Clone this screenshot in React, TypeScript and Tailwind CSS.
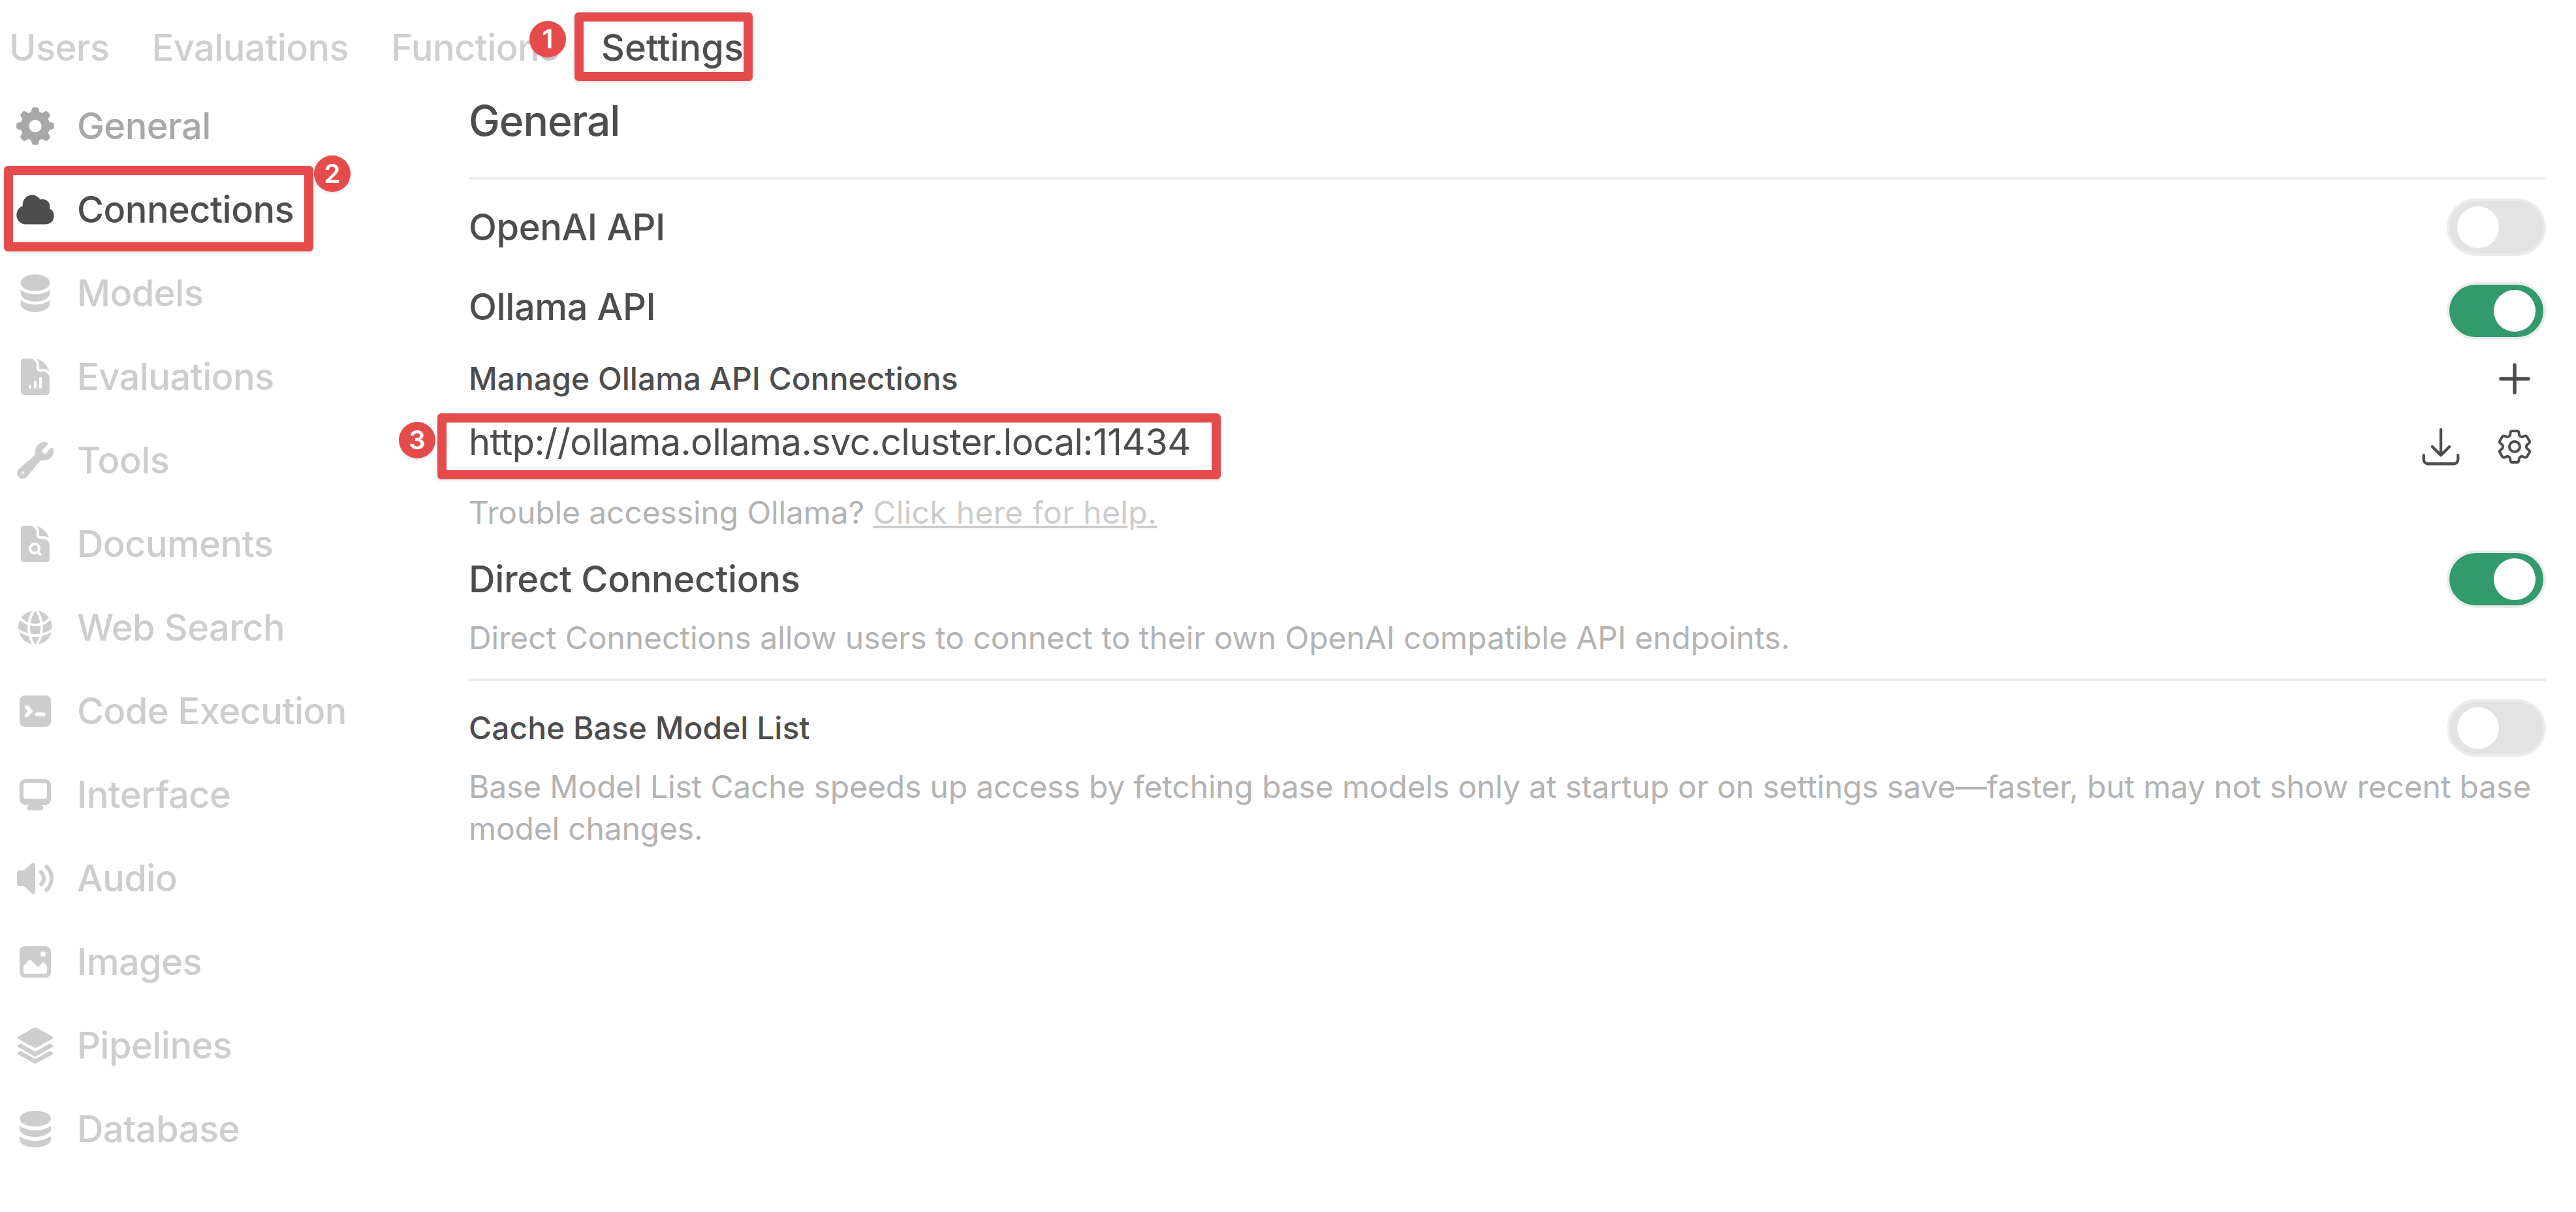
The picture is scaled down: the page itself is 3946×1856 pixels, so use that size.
import type { ReactNode } from "react";
import {
  HiDocumentChartBar,
  HiDocumentMagnifyingGlass,
  HiGlobeAlt,
  HiWrench,
  HiOutlineArrowDownTray,
  HiOutlineCog6Tooth,
} from "react-icons/hi2";

function Glyph({ box, paths, className }: { box: number; paths: string[]; className?: string }) {
  return (
    <svg viewBox={`0 0 ${box} ${box}`} fill="currentColor" className={className}>
      {paths.map((d) => (
        <path key={d} fillRule="evenodd" clipRule="evenodd" d={d} />
      ))}
    </svg>
  );
}

const gear = [
  "M8.34 1.804A1 1 0 019.32 1h1.36a1 1 0 01.98.804l.295 1.473c.497.144.971.342 1.416.587l1.25-.834a1 1 0 011.262.125l.962.962a1 1 0 01.125 1.262l-.834 1.25c.245.445.443.919.587 1.416l1.473.294a1 1 0 01.804.98v1.361a1 1 0 01-.804.98l-1.473.295a6.95 6.95 0 01-.587 1.416l.834 1.25a1 1 0 01-.125 1.262l-.962.962a1 1 0 01-1.262.125l-1.25-.834a6.953 6.953 0 01-1.416.587l-.294 1.473a1 1 0 01-.98.804H9.32a1 1 0 01-.98-.804l-.295-1.473a6.957 6.957 0 01-1.416-.587l-1.25.834a1 1 0 01-1.262-.125l-.962-.962a1 1 0 01-.125-1.262l.834-1.25a6.957 6.957 0 01-.587-1.416l-1.473-.294A1 1 0 011 10.68V9.32a1 1 0 01.804-.98l1.473-.295c.144-.497.342-.971.587-1.416l-.834-1.25a1 1 0 01.125-1.262l.962-.962A1 1 0 015.38 3.03l1.25.834a6.957 6.957 0 011.416-.587l.294-1.473zM13 10a3 3 0 11-6 0 3 3 0 016 0z",
];
const cloud = [
  "M1 12.5A4.5 4.5 0 005.5 17H15a4 4 0 001.866-7.539 3.504 3.504 0 00-4.504-4.272A4.5 4.5 0 004.06 8.235 4.502 4.502 0 001 12.5z",
];
const stack20 = [
  "M10 1c3.866 0 7 1.79 7 4s-3.134 4-7 4-7-1.79-7-4 3.134-4 7-4zm5.694 8.13c.464-.264.91-.583 1.306-.952V10c0 2.21-3.134 4-7 4s-7-1.79-7-4V8.178c.396.37.842.688 1.306.953C5.838 10.006 7.854 10.5 10 10.5s4.162-.494 5.694-1.37zM3 13.179V15c0 2.21 3.134 4 7 4s7-1.79 7-4v-1.822c-.396.37-.842.688-1.306.953-1.532.875-3.548 1.369-5.694 1.369s-4.162-.494-5.694-1.37A7.009 7.009 0 013 13.179z",
];
const stack16 = [
  "M8 7c3.314 0 6-1.343 6-3s-2.686-3-6-3-6 1.343-6 3 2.686 3 6 3Z",
  "M8 8.5c1.84 0 3.579-.37 4.914-1.037A6.33 6.33 0 0 0 14 6.78V8c0 1.657-2.686 3-6 3S2 9.657 2 8V6.78c.346.273.72.5 1.087.683C4.42 8.131 6.16 8.5 8 8.5Z",
  "M8 12.5c1.84 0 3.579-.37 4.914-1.037.366-.183.74-.41 1.086-.684V12c0 1.657-2.686 3-6 3s-6-1.343-6-3v-1.22c.346.273.72.5 1.087.683C4.42 12.131 6.16 12.5 8 12.5Z",
];
const terminal = [
  "M2 4a2 2 0 0 1 2-2h8a2 2 0 0 1 2 2v8a2 2 0 0 1-2 2H4a2 2 0 0 1-2-2V4Zm2.22 1.97a.75.75 0 0 0 0 1.06l.97.97-.97.97a.75.75 0 1 0 1.06 1.06l1.5-1.5a.75.75 0 0 0 0-1.06l-1.5-1.5a.75.75 0 0 0-1.06 0ZM8.75 8.5a.75.75 0 0 0 0 1.5h2.5a.75.75 0 0 0 0-1.5h-2.5Z",
];
const desktop = [
  "M2 4.25A2.25 2.25 0 0 1 4.25 2h7.5A2.25 2.25 0 0 1 14 4.25v5.5A2.25 2.25 0 0 1 11.75 12h-1.312c.1.128.21.248.328.36a.75.75 0 0 1 .234.545v.345a.75.75 0 0 1-.75.75h-4.5a.75.75 0 0 1-.75-.75v-.345a.75.75 0 0 1 .234-.545c.118-.111.228-.232.328-.36H4.25A2.25 2.25 0 0 1 2 9.75v-5.5Zm2.25-.75a.75.75 0 0 0-.75.75v4.5c0 .414.336.75.75.75h7.5a.75.75 0 0 0 .75-.75v-4.5a.75.75 0 0 0-.75-.75h-7.5Z",
];
const speaker = [
  "M7.557 2.066A.75.75 0 0 1 8 2.75v10.5a.75.75 0 0 1-1.248.56L3.59 11H2a1 1 0 0 1-1-1V6a1 1 0 0 1 1-1h1.59l3.162-2.81a.75.75 0 0 1 .805-.124ZM12.95 3.05a.75.75 0 1 0-1.06 1.06 5.5 5.5 0 0 1 0 7.78.75.75 0 1 0 1.06 1.06 7 7 0 0 0 0-9.9Z",
  "M10.828 5.172a.75.75 0 1 0-1.06 1.06 2.5 2.5 0 0 1 0 3.536.75.75 0 1 0 1.06 1.06 4 4 0 0 0 0-5.656Z",
];
const photo = [
  "M2 4a2 2 0 0 1 2-2h8a2 2 0 0 1 2 2v8a2 2 0 0 1-2 2H4a2 2 0 0 1-2-2V4Zm10.5 5.707a.5.5 0 0 0-.146-.353l-1-1a.5.5 0 0 0-.708 0L9.354 9.646a.5.5 0 0 1-.708 0L6.354 7.354a.5.5 0 0 0-.708 0l-2 2a.5.5 0 0 0-.146.353V12a.5.5 0 0 0 .5.5h8a.5.5 0 0 0 .5-.5V9.707ZM12 5a1 1 0 1 1-2 0 1 1 0 0 1 2 0Z",
];
const layers = [
  "M7.63 1.1a.75.75 0 0 1 .74 0l6.25 3.55a.4.4 0 0 1 0 .7L8.37 8.9a.75.75 0 0 1-.74 0L1.38 5.35a.4.4 0 0 1 0-.7L7.63 1.1Z",
  "M2.4 7.25 1.38 7.85a.4.4 0 0 0 0 .7l6.25 3.55a.75.75 0 0 0 .74 0l6.25-3.55a.4.4 0 0 0 0-.7L13.6 7.25 8.4 10.2a.8.8 0 0 1-.8 0L2.4 7.25Z",
  "M2.4 10.05 1.38 10.65a.4.4 0 0 0 0 .7l6.25 3.55a.75.75 0 0 0 .74 0l6.25-3.55a.4.4 0 0 0 0-.7l-1.02-.6L8.4 13a.8.8 0 0 1-.8 0L2.4 10.05Z",
];

const iconClass = "w-[64px] h-[64px] shrink-0";

const navItems: { label: string; color: string; icon: ReactNode }[] = [
  { label: "General", color: "text-[#a8a8a8]", icon: <Glyph box={20} paths={gear} className={iconClass} /> },
  { label: "Connections", color: "text-[#4d4d4d]", icon: <Glyph box={20} paths={cloud} className={iconClass} /> },
  { label: "Models", color: "text-[#cdcdcd]", icon: <Glyph box={20} paths={stack20} className={iconClass} /> },
  { label: "Evaluations", color: "text-[#cdcdcd]", icon: <HiDocumentChartBar className={iconClass} /> },
  { label: "Tools", color: "text-[#cdcdcd]", icon: <HiWrench className={iconClass} /> },
  { label: "Documents", color: "text-[#cdcdcd]", icon: <HiDocumentMagnifyingGlass className={iconClass} /> },
  { label: "Web Search", color: "text-[#cdcdcd]", icon: <HiGlobeAlt className={iconClass} /> },
  { label: "Code Execution", color: "text-[#cdcdcd]", icon: <Glyph box={16} paths={terminal} className={iconClass} /> },
  { label: "Interface", color: "text-[#cdcdcd]", icon: <Glyph box={16} paths={desktop} className={iconClass} /> },
  { label: "Audio", color: "text-[#cdcdcd]", icon: <Glyph box={16} paths={speaker} className={iconClass} /> },
  { label: "Images", color: "text-[#cdcdcd]", icon: <Glyph box={16} paths={photo} className={iconClass} /> },
  { label: "Pipelines", color: "text-[#cdcdcd]", icon: <Glyph box={16} paths={layers} className={iconClass} /> },
  { label: "Database", color: "text-[#cdcdcd]", icon: <Glyph box={16} paths={stack16} className={iconClass} /> },
];

function Toggle({ on }: { on?: boolean }) {
  return (
    <div
      className={`w-[152px] h-[88px] shrink-0 rounded-full border-4 border-[#ececec] px-[12px] flex items-center ${
        on ? "bg-[#339a6d] justify-end" : "bg-[#e3e3e3] justify-start"
      }`}
    >
      <div className="w-[64px] h-[64px] rounded-full bg-white" />
    </div>
  );
}

function RedBox({ className }: { className: string }) {
  return <div className={`absolute border-[14px] border-[#e64b4b] rounded-[6px] shadow-[0_2px_4px_rgba(0,0,0,0.12)] ${className}`} />;
}

function Badge({ n, className }: { n: number; className: string }) {
  return (
    <div
      className={`absolute w-[56px] h-[56px] rounded-full bg-[#e64b4b] text-white text-[40px] font-semibold flex items-center justify-center shadow-[0_2px_4px_rgba(0,0,0,0.12)] ${className}`}
    >
      {n}
    </div>
  );
}

export default function App() {
  return (
    <div className="relative w-full h-[1856px] overflow-hidden bg-white font-['Inter',sans-serif]">
      {/* Tabs */}
      <div className="h-[129px] pt-[31px] pl-[14px] flex gap-[65px] text-[56px] leading-[84px] font-medium tracking-[-0.56px] text-[#cfcfcf]">
        <span>Users</span>
        <span>Evaluations</span>
        <span>Functions</span>
        <span className="text-[#4d4d4d] tracking-[0px]">Settings</span>
      </div>

      <div className="flex">
        {/* Sidebar */}
        <div className="w-[718px] shrink-0">
          {navItems.map((item) => (
            <div key={item.label} className={`h-[128px] pl-[22px] flex items-center gap-[32px] text-[56px] font-medium tracking-[-0.56px] ${item.color}`}>
              {item.icon}
              <span>{item.label}</span>
            </div>
          ))}
        </div>

        {/* Main */}
        <div className="w-[3182px]">
          <div className="pt-[8px] text-[64px] leading-[96px] font-medium tracking-[-1px] text-[#4d4d4d]">General</div>
          <div className="mt-[38px] h-[4px] bg-[#ececec]" />

          <div className="mt-[29px] flex flex-col gap-[40px]">
            <div className="flex items-center justify-between h-[88px]">
              <span className="text-[56px] font-medium tracking-[-0.4px] text-[#4d4d4d]">OpenAI API</span>
              <Toggle />
            </div>
            <div className="flex items-center justify-between h-[88px]">
              <span className="mb-[12px] text-[56px] font-medium tracking-[-0.4px] text-[#4d4d4d]">Ollama API</span>
              <Toggle on />
            </div>
          </div>

          <div className="mt-[28px] h-[64px] flex items-center justify-between">
            <span className="text-[48px] font-medium text-[#4d4d4d]">Manage Ollama API Connections</span>
            <svg viewBox="0 0 64 64" className="w-[64px] h-[64px] mr-[16px] text-[#4d4d4d]" fill="none" stroke="currentColor" strokeWidth="5.5" strokeLinecap="round">
              <path d="M32 11v42M11 32h42" />
            </svg>
          </div>

          <div className="mt-[25px] h-[80px] flex items-center justify-between">
            <span className="text-[56px] tracking-[-0.56px] text-[#4d4d4d]">http://ollama.ollama.svc.cluster.local:11434</span>
            <div className="flex items-center gap-[46px] mr-[16px] mt-[14px] text-[#4d4d4d]">
              <HiOutlineArrowDownTray className="w-[70px] h-[70px]" />
              <HiOutlineCog6Tooth className="w-[64px] h-[64px]" />
            </div>
          </div>

          <div className="mt-[36px] text-[48px] leading-[64px] tracking-[-0.12px] text-[#b3b3b3]">
            Trouble accessing Ollama? <span className="underline tracking-[0.3px] text-[#cccccc]">Click here for help.</span>
          </div>

          <div className="mt-[26px] flex items-center justify-between h-[88px]">
            <span className="text-[56px] font-medium tracking-[-0.28px] text-[#4d4d4d]">Direct Connections</span>
            <Toggle on />
          </div>
          <div className="mt-[14px] text-[48px] leading-[64px] tracking-[-0.06px] text-[#b3b3b3]">
            Direct Connections allow users to connect to their own OpenAI compatible API endpoints.
          </div>

          <div className="mt-[30px] h-[4px] bg-[#ececec]" />

          <div className="mt-[28px] flex items-center justify-between h-[88px]">
            <span className="text-[48px] font-medium text-[#4d4d4d]">Cache Base Model List</span>
            <Toggle />
          </div>
          <div className="mt-[14px] text-[48px] leading-[64px] tracking-[-0.17px] text-[#b3b3b3]">
            Base Model List Cache speeds up access by fetching base models only at startup or on settings save—faster, but may not show recent base model changes.
          </div>
        </div>
      </div>

      {/* Annotations */}
      <RedBox className="left-[880px] top-[19px] w-[273px] h-[105px]" />
      <RedBox className="left-[6px] top-[254px] w-[474px] h-[131px]" />
      <RedBox className="left-[670px] top-[633px] w-[1200px] h-[101px]" />
      <Badge n={1} className="left-[811px] top-[32px]" />
      <Badge n={2} className="left-[481px] top-[238px]" />
      <Badge n={3} className="left-[611px] top-[646px]" />
    </div>
  );
}
